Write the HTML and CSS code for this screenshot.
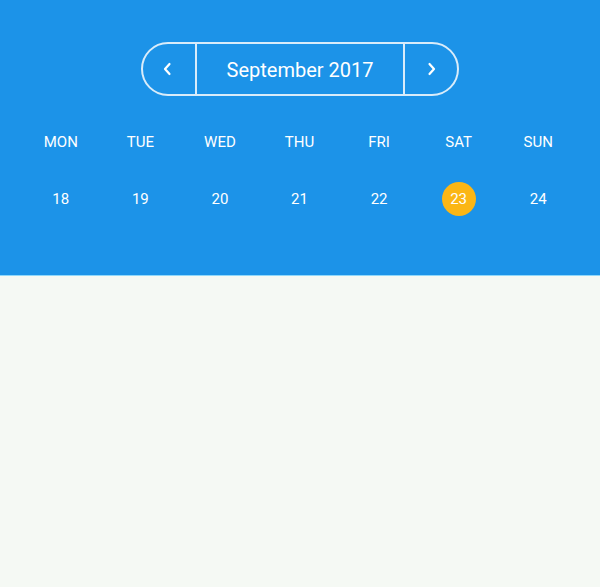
FILE: index.html
```html
<!DOCTYPE html>
<html>
<head>
<meta charset="utf-8">
<link rel="stylesheet" href="styles.css">
</head>
<body>
<div class="header">
  <div class="nav">
    <button class="nav-btn prev" aria-label="Previous">
      <svg width="12" height="14" viewBox="0 0 12 14"><path d="M6.5 2 L2 7 L6.5 12" fill="none" stroke="#fff" stroke-width="2.2" stroke-linecap="round" stroke-linejoin="round"/></svg>
    </button>
    <div class="month">September 2017</div>
    <button class="nav-btn next" aria-label="Next">
      <svg width="12" height="14" viewBox="0 0 12 14"><path d="M4.5 2 L9 7 L4.5 12" fill="none" stroke="#fff" stroke-width="2.2" stroke-linecap="round" stroke-linejoin="round"/></svg>
    </button>
  </div>
  <div class="grid names">
    <div>MON</div><div>TUE</div><div>WED</div><div>THU</div><div>FRI</div><div>SAT</div><div>SUN</div>
  </div>
  <div class="grid days">
    <div><span>18</span></div>
    <div><span>19</span></div>
    <div><span>20</span></div>
    <div><span>21</span></div>
    <div><span>22</span></div>
    <div><span class="sel">23</span></div>
    <div><span>24</span></div>
  </div>
</div>
</body>
</html>
```
FILE: styles.css
```css
html, body {
  margin: 0;
  padding: 0;
  background: #f5f9f4;
  font-family: Roboto, "Liberation Sans", sans-serif;
}
.header {
  background: #1c93e8;
  border-bottom: 1px solid #8fd8fb;
  padding-top: 42px;
  box-sizing: content-box;
  height: 233px;
}
.nav {
  width: 318px;
  height: 54px;
  margin: 0 auto;
  box-sizing: border-box;
  border: 2px solid #d9ecfa;
  border-radius: 27px;
  display: flex;
  color: #fff;
}
.nav-btn {
  width: 54px;
  background: none;
  border: 0;
  padding: 0;
  display: flex;
  align-items: center;
  justify-content: center;
}
.nav-btn.prev { border-right: 2px solid #d9ecfa; }
.nav-btn.next { border-left: 2px solid #d9ecfa; }
.month {
  flex: 1;
  display: flex;
  align-items: center;
  justify-content: center;
  font-size: 20px;
  color: #fff;
  padding-top: 2px;
}
.grid {
  display: grid;
  grid-template-columns: repeat(7, 1fr);
  padding: 0 22px 0 21px;
  color: #fff;
  text-align: center;
}
.names {
  margin-top: 37px;
  font-size: 15px;
  line-height: 18px;
}
.days {
  margin-top: 31px;
  font-size: 15px;
}
.days div {
  display: flex;
  justify-content: center;
}
.days span {
  width: 34px;
  height: 34px;
  border-radius: 50%;
  display: flex;
  align-items: center;
  justify-content: center;
}
.days .sel {
  background: #fbb615;
}
```
